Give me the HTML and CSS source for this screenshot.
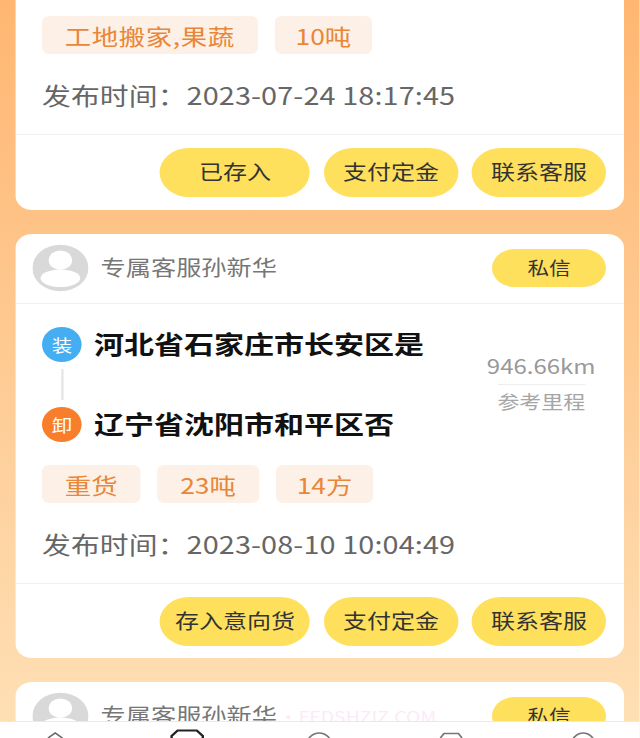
FILE: index.html
```html
<!DOCTYPE html>
<html>
<head>
    <meta charset="utf-8">
    <link rel="stylesheet" href="styles.css">
    <title>Orders</title>
</head>
<body>
<div class="page">
    <div class="list">
        <section class="card card-cut">
            <div class="card-body">
                <div class="tags">
                    <span class="tag tag-long">工地搬家,果蔬</span>
                    <span class="tag tag-narrow">10吨</span>
                </div>
                <p class="time">发布时间：2023-07-24 18:17:45</p>
            </div>
            <div class="actions">
                <button class="btn btn-wide">已存入</button>
                <button class="btn">支付定金</button>
                <button class="btn">联系客服</button>
            </div>
        </section>

        <section class="card">
            <div class="card-head">
                <svg class="avatar" viewBox="0 0 48 48">
                    <circle cx="24" cy="24" r="24" fill="#d9d9d9"/>
                    <circle cx="24" cy="16" r="10" fill="#fff"/>
                    <ellipse cx="24" cy="34.500" rx="17" ry="9" fill="#fff"/>
                </svg>
                <span class="name">专属客服孙新华</span>
                <button class="btn btn-small">私信</button>
            </div>
            <div class="card-body">
                <div class="trip">
                    <div class="route">
                        <div class="stop">
                            <span class="dot dot-load">装</span>
                            <span class="place">河北省石家庄市长安区是</span>
                        </div>
                        <div class="link"></div>
                        <div class="stop">
                            <span class="dot dot-unload">卸</span>
                            <span class="place">辽宁省沈阳市和平区否</span>
                        </div>
                    </div>
                    <div class="distance">
                        <div class="km">946.66km</div>
                        <div class="km-label">参考里程</div>
                    </div>
                </div>
                <div class="tags">
                    <span class="tag">重货</span>
                    <span class="tag">23吨</span>
                    <span class="tag tag-narrow">14方</span>
                </div>
                <p class="time">发布时间：2023-08-10 10:04:49</p>
            </div>
            <div class="actions">
                <button class="btn btn-wide">存入意向货</button>
                <button class="btn">支付定金</button>
                <button class="btn">联系客服</button>
            </div>
        </section>

        <section class="card">
            <div class="card-head">
                <svg class="avatar" viewBox="0 0 48 48">
                    <circle cx="24" cy="24" r="24" fill="#d9d9d9"/>
                    <circle cx="24" cy="16" r="10" fill="#fff"/>
                    <ellipse cx="24" cy="34.500" rx="17" ry="9" fill="#fff"/>
                </svg>
                <span class="name">专属客服孙新华</span>
                <button class="btn btn-small">私信</button>
            </div>
        </section>

        <span class="watermark">• FEDSHZIZ.COM</span>
    </div>

    <nav class="tabbar">
        <svg class="tab" viewBox="0 0 32 16"><path d="M10 16l6-5 6 5" fill="none" stroke="#666" stroke-width="1.5"/></svg>
        <svg class="tab" viewBox="0 0 32 16"><path d="M3 16v-2l5-5.500h16l5 5.500v2" fill="none" stroke="#222" stroke-width="2"/></svg>
        <svg class="tab" viewBox="0 0 32 16"><ellipse cx="16" cy="24" rx="10.500" ry="13" fill="none" stroke="#777" stroke-width="1.500"/></svg>
        <svg class="tab" viewBox="0 0 32 16"><path d="M7 16l3-4.500h12l3 4.500" fill="none" stroke="#777" stroke-width="1.500"/></svg>
        <svg class="tab" viewBox="0 0 32 16"><ellipse cx="16" cy="24" rx="10" ry="13" fill="none" stroke="#777" stroke-width="1.500"/></svg>
    </nav>
</div>
</body>
</html>
```

FILE: styles.css
```css
* {
    box-sizing: border-box;
    font-family: "Noto Sans CJK SC", "Noto Sans", sans-serif;
}

html, body {
    margin: 0;
    padding: 0;
    height: 738px;
    overflow: hidden;
}

/* the whole screen is stretched 1.2x sideways, widths below are before the stretch */
.page {
    width: 533.33px;
    height: 738px;
    display: flex;
    flex-direction: column;
    transform: scaleX(1.2);
    transform-origin: left top;
    background: linear-gradient(to bottom, #ffb672, #fee0b6);
}

.list {
    position: relative;
    flex: 1;
    min-height: 0;
    overflow: hidden;
    padding: 0 13.33px;
    display: flex;
    flex-direction: column;
    gap: 24px;
}

.card {
    flex-shrink: 0;
    background-color: #fff;
    border-radius: 14px;
}

.card-cut {
    border-radius: 0 0 14px 14px;
    padding-top: 16px;
    padding-bottom: 1px;
}

.card-head {
    height: 70px;
    display: flex;
    align-items: center;
    padding: 0 15px 2px 13.8px;
    border-bottom: 1px solid #f0f0f0;
}

.avatar {
    width: 46.67px;
    height: 48px;
    flex-shrink: 0;
}

.name {
    margin: 0 0 3px 10px;
    flex: 1;
    font-size: 21px;
    color: #777;
}

.card-body {
    padding: 0 0 0 21.67px;
}

.trip {
    display: flex;
    align-items: center;
    padding-top: 23px;
    margin-bottom: 23px;
}

.route {
    flex: 1;
}

.stop {
    height: 35px;
    display: flex;
    align-items: center;
}

.dot {
    width: 33.33px;
    height: 35px;
    margin-right: 10px;
    border-radius: 50%;
    flex-shrink: 0;
    display: flex;
    align-items: center;
    justify-content: center;
    color: #fff;
    font-size: 17px;
}

.dot-load {
    background-color: #45aef2;
}

.dot-unload {
    background-color: #f97e2b;
}

.link {
    width: 2px;
    height: 31px;
    margin: 7px 0 7px 15.67px;
    background-color: #e6e6e6;
}

.place {
    font-size: 25px;
    font-weight: 700;
    color: #111;
    white-space: nowrap;
    margin-bottom: 3px;
}

.distance {
    width: 92px;
    margin-right: 23px;
    text-align: center;
}

.km {
    font-size: 20px;
    line-height: 30px;
    padding-bottom: 3px;
    color: #999;
    white-space: nowrap;
}

.km-label {
    font-size: 18.300px;
    line-height: 33px;
    color: #a6a6a6;
    border-top: 1px solid #eee;
    margin: 0 9.500px;
    white-space: nowrap;
}

.tags {
    display: flex;
    gap: 14.17px;
}

.tag {
    height: 38px;
    padding: 0 19px;
    display: flex;
    align-items: center;
    border-radius: 6px;
    background-color: #fdf0e6;
    color: #e8863a;
    font-size: 22px;
}

.tag-long {
    letter-spacing: 0.5px;
}

.tag-narrow {
    padding: 0 17.5px;
}

.time {
    margin: 21px 0 0;
    padding-bottom: 19px;
    font-size: 24px;
    line-height: 40px;
    color: #666;
    letter-spacing: 0.1px;
}

.actions {
    display: flex;
    justify-content: flex-end;
    gap: 11.67px;
    padding: 13px 15px 12px;
    border-top: 1px solid #f0f0f0;
}

.btn {
    width: 111.67px;
    height: 49px;
    padding: 0 0 2px;
    border: none;
    border-radius: 25px;
    background-color: #fee05c;
    color: #333;
    font-size: 20px;
}

.btn-wide {
    width: 125px;
}

.btn-small {
    width: 95px;
    height: 38px;
    border-radius: 19px;
    font-size: 18px;
    flex-shrink: 0;
}

.watermark {
    position: absolute;
    left: 232px;
    top: 704px;
    font-size: 16.200px;
    line-height: 24px;
    word-spacing: -3px;
    color: #fdeaf7;
    white-space: nowrap;
}

.tabbar {
    height: 17px;
    flex-shrink: 0;
    display: flex;
    gap: 78px;
    padding-left: 29.8px;
    overflow: hidden;
    background-color: #fff;
    border-top: 1px solid #fbe6c8;
}

.tab {
    width: 32px;
    height: 16px;
    flex-shrink: 0;
}
```
